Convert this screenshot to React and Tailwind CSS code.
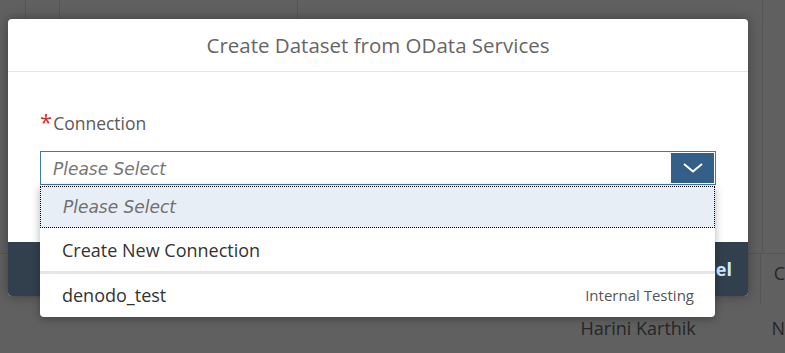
import React from "react";

const Chevron = () => (
  <svg width="20" height="10" viewBox="0 0 20 10" fill="none">
    <polyline points="1,1 10,8.5 19,1" stroke="#ffffff" strokeWidth="2" />
  </svg>
);

const italicFont = { fontFamily: '"DejaVu Sans", "Open Sans", sans-serif' };

const App = () => {
  return (
    <div
      className="relative w-[785px] h-[353px] overflow-hidden bg-[#606060]"
      style={{ fontFamily: '"Open Sans", "Noto Sans", sans-serif' }}
    >
      {/* page behind the overlay */}
      <div className="flex flex-col h-full">
        <div className="flex h-[253px]">
          <div className="w-[26px] border-r border-[#555555]" />
          <div className="w-[34px] border-r border-[#555555]" />
          <div className="w-[238px] border-r border-[#555555]" />
          <div className="w-[465px] border-r border-[#555555]" />
          <div className="flex-1" />
        </div>
        <div className="flex h-[52px] border-t border-[#565656]">
          <div className="w-[763px] border-r border-[#565656]" />
          <div className="flex-1 pl-[13px] pt-[6px] text-[18px] text-[#262626]">C</div>
        </div>
        <div className="flex flex-1">
          <div className="w-[584px]" />
          <div className="w-[192px] pt-[10px] text-[18px] text-[#262626]">Harini Karthik</div>
          <div className="flex-1 pt-[10px] text-[18px] text-[#262626]">N</div>
        </div>
      </div>

      {/* dialog */}
      <div className="absolute left-[8px] top-[19px] w-[740px] rounded-[4px] bg-white shadow-[0_0_12px_rgba(0,0,0,0.35)] overflow-hidden">
        <div className="h-[53px] flex items-center justify-center border-b border-[#e5e5e5] text-[20.5px] text-[#666666]">
          Create Dataset from OData Services
        </div>
        <div className="px-[32px] pt-[42px] pb-[57px]">
          <div className="h-[20px] flex items-center text-[17.5px] text-[#5a5a5a] leading-none">
            <span className="text-[#d0302f] text-[22px] self-start -mt-[4px] mr-[1px]">*</span>
            Connection
          </div>
          <div className="mt-[17px] h-[34px] flex border border-[#3f78ab] bg-white">
            <div
              className="flex-1 flex items-center pl-[12px] pt-[3px] text-[17px] italic text-[#767676]"
              style={italicFont}
            >
              Please Select
            </div>
            <div className="w-[43px] my-[1px] mr-[1px] flex items-center justify-center bg-[#335f88]">
              <Chevron />
            </div>
          </div>
        </div>
        <div className="h-[54px] bg-[#323f4d] flex items-center justify-end pr-[16px]">
          <span className="text-[18px] font-bold text-[#d1e8ff]">Cancel</span>
        </div>
      </div>

      {/* open dropdown list */}
      <div className="absolute left-[40px] top-[186px] w-[675px] bg-white rounded-b-[4px] shadow-[0_2px_8px_rgba(0,0,0,0.3)] text-[18px] text-[#333333]">
        <div
          className="h-[42px] flex items-center pl-[22px] pt-[2px] bg-[#e8eef6] border border-dotted border-black italic text-[17px] text-[#707070]"
          style={italicFont}
        >
          Please Select
        </div>
        <div className="h-[43px] flex items-center pl-[22px] pt-[1px] bg-white">
          Create New Connection
        </div>
        <div className="h-[3px] bg-[#e5e5e5]" />
        <div className="h-[43px] flex items-center justify-between pl-[22px] pr-[21px]">
          <span>denodo_test</span>
          <span className="text-[15px] text-[#555555]">Internal Testing</span>
        </div>
      </div>
    </div>
  );
};

export default App;
